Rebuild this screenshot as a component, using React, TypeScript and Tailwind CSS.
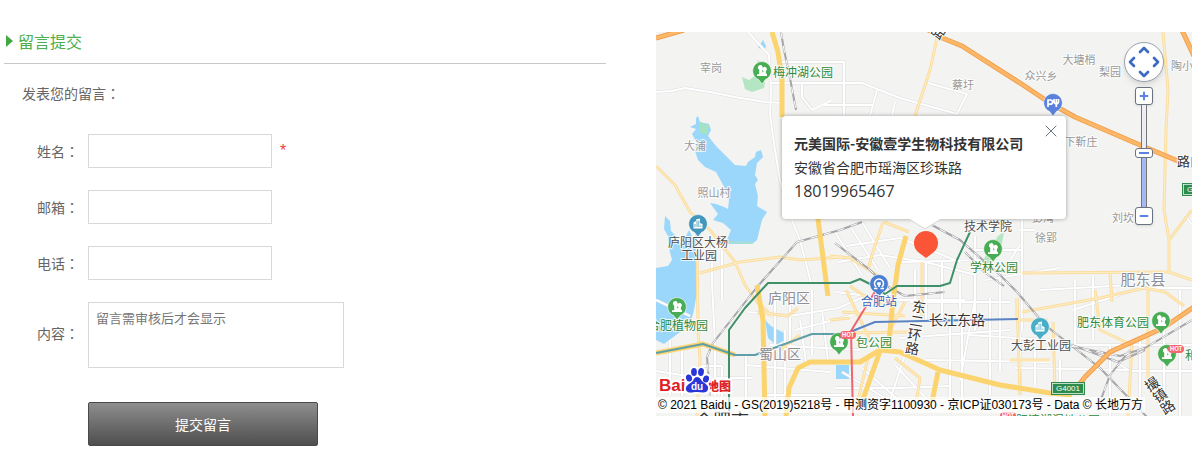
import { useState } from "react"
import { ChevronDown, ChevronLeft, ChevronRight, ChevronUp, Minus, Plus, X } from "lucide-react"

const whiteRoads = [
  "M656 92L671 91L685 88L710 92L735 97L765 102L784 103",
  "M748 32L757 42L769 55L771 90L770 115L775 150L780 180L788 210L800 240L811 283",
  "M778 62H844V116", "M770 83H862L900 98L957 114L967 94L928 83", "M877 90L870 116M824 105H872M895 102L892 116",
  "M802 82V97L812 110L832 100", "M656 300L690 316M712 245V283L715 345V396M722 250V300", "M746 355V410M715 378H752M700 366H722V396",
  "M745 365L830 372M775 300V400M785 330V395M765 395H850M795 330L850 316L880 300",
  "M748 312L790 316L838 308L866 296M790 300V360M800 320L806 362M812 290V355M822 310L828 362M770 345L860 350",
  "M835 232L862 275M850 226L878 270M862 222L890 268M838 262L880 255L925 262L976 275M846 246L900 238L960 262M836 292L900 300L965 300",
  "M842 372L885 398M862 368L910 410M895 365L935 408M835 388H900L950 386M905 355L890 400",
  "M902 262L980 260M915 270V315M926 262V320M942 262V320M910 302H1010M975 236V330M960 276V310M1000 262V370M1022 210V330",
  "M950 320V405M962 325V405M990 298V395M968 335L1050 340M900 338L1010 330M925 360L1050 362M1015 368L1130 370M975 300L960 380",
  "M1020 335V395M1035 345V385M1075 280V345M1093 276V340M1065 345H1192M1073 310L1140 288H1192M1040 290L1130 285",
  "M1020 230H1034M1020 245L1010 260M1185 215L1192 225M1098 350L1130 371H1192M1180 290V416M1164 330V410M1110 345V416",
  "M970 250H1022M985 280L1060 268M656 371L700 378M670 340V395M682 345V396M1140 335V400M900 400H1050M1060 360V416",
]

const paleRoads = [
  "M656 166L675 185L690 212L710 230L735 262L745 285L757 302L772 316",
  "M697 240L698 330L700 360L697 416", "M700 273L740 262L780 257L800 260L842 257",
  "M937 38L930 70L915 116", "M1163 32L1168 90L1166 130L1164 210L1169 240V272L1192 280M1169 240L1192 210",
  "M1022 273L1170 272M1110 272L1112 302M1017 298V320H1048M1022 312L1100 298L1145 288L1165 292L1184 306",
  "M1053 322L1055 390M1095 290L1100 330L1132 345L1128 416M1148 290V380M1010 360H1050",
  "M883 222L872 255L868 270M884 222L909 232M830 256L850 258L877 275M850 286L870 300L893 306M842 312L905 316M848 333L910 332",
  "M846 290L870 340M905 302L890 330M922 316V262M1017 298L1020 395M780 350L800 335M757 312L788 316L798 308",
  "M895 358L920 378L915 410M868 358L858 400M830 320L850 318",
]

const yellowRoads = [
  "M772 32L778 52L782 80V117", "M818 219L828 296", "M757 285L763 320L765 416",
  "M786 416L789 388L798 368L810 362H860L880 350L900 352L940 370L1000 385L1050 393L1072 395",
  "M862 402L880 351M932 402L938 372", "M906 236L898 265L893 300L888 352",
]

const orangeRoads = [
  "M656 38L684 30", "M925 28L940 37L962 46L1020 83L1050 103L1075 117L1140 145L1178 161",
  "M1180 26L1194 56", "M1194 307L1163 328L1110 352L1085 377L1075 390",
]

const railways = [
  "M781 32L784 50L790 78L796 110", "M797 242L757 287L713 343L707 357L710 396",
  "M797 242L840 230L862 222", "M915 216L960 240L1000 275L1017 292L1045 325L1100 368L1148 418",
  "M1192 320L1145 348L1120 356L1070 346", "M1130 350L1110 375L1100 402", "M835 243L870 270L885 285L905 296L945 292",
  "M965 252L984 272L1004 286", "M1072 345L1118 362L1145 350",
]

const labels = [
  { text: "宰岗", x: 711, y: 72, size: 11, fill: "#999999" },
  { text: "蔡圩", x: 963, y: 89, size: 11, fill: "#999999" },
  { text: "众兴乡", x: 1041, y: 80, size: 11, fill: "#999999" },
  { text: "大塘梢", x: 1079, y: 64, size: 11, fill: "#999999" },
  { text: "梨园", x: 1110, y: 76, size: 11, fill: "#999999" },
  { text: "陶小", x: 1182, y: 70, size: 11, fill: "#999999" },
  { text: "下靳庄", x: 1081, y: 146, size: 11, fill: "#999999" },
  { text: "大浦", x: 695, y: 150, size: 11, fill: "#999999" },
  { text: "照山村", x: 714, y: 197, size: 11, fill: "#999999" },
  { text: "彭湾", x: 1043, y: 222, size: 11, fill: "#999999" },
  { text: "徐郢", x: 1046, y: 242, size: 11, fill: "#999999" },
  { text: "刘坎", x: 1123, y: 222, size: 11, fill: "#999999" },
  { text: "庐阳区", x: 789, y: 303, size: 14, fill: "#8f8f98" },
  { text: "蜀山区", x: 780, y: 359, size: 14, fill: "#8f8f98" },
  { text: "肥东县", x: 1143, y: 285, size: 15, fill: "#8f8f98" },
  { text: "梅冲湖公园", x: 803, y: 77, size: 12, fill: "#2f8a3c" },
  { text: "学林公园", x: 994, y: 272, size: 12, fill: "#2f8a3c" },
  { text: "合肥植物园", x: 678, y: 330, size: 12, fill: "#2f8a3c" },
  { text: "包公园", x: 874, y: 347, size: 12, fill: "#2f8a3c" },
  { text: "肥东体育公园", x: 1113, y: 327, size: 12, fill: "#2f8a3c" },
  { text: "和", x: 1191, y: 360, size: 12, fill: "#2f8a3c" },
  { text: "合肥滨湖湿地公园", x: 1052, y: 425, size: 12, fill: "#2f8a3c" },
  { text: "庐阳区大杨", x: 698, y: 247, size: 12, fill: "#505050" },
  { text: "工业园", x: 699, y: 260, size: 12, fill: "#505050" },
  { text: "技术学院", x: 988, y: 231, size: 12, fill: "#505050" },
  { text: "大彭工业园", x: 1041, y: 350, size: 12, fill: "#505050" },
  { text: "合肥站", x: 879, y: 306, size: 12, fill: "#3567b8" },
  { text: "长江东路", x: 957, y: 325, size: 14, fill: "#333333" },
  { text: "路口", x: 1190, y: 166, size: 13, fill: "#333333" },
  { text: "合肥市", x: 722, y: 427, size: 18, fill: "#333333" },
]

// road names that run down along their road
const roadNames = [
  { text: "东二环路", x: 920, y: 300, angle: 9 },
  { text: "撮镇路", x: 1148, y: 378, angle: -34 },
  { text: "路", x: 933, y: 28, angle: -55 },
]

const pins = [
  { kind: "park", x: 762, y: 71, fill: "#49ad55" },
  { kind: "park", x: 993, y: 249, fill: "#49ad55" },
  { kind: "park", x: 677, y: 307, fill: "#49ad55" },
  { kind: "park", x: 1161, y: 321, fill: "#49ad55" },
  { kind: "park", x: 839, y: 342, fill: "#49ad55" },
  { kind: "park", x: 1167, y: 354, fill: "#49ad55" },
  { kind: "building", x: 698, y: 224, fill: "#4397bd" },
  { kind: "building", x: 1040, y: 327, fill: "#48adc6" },
  { kind: "station", x: 879, y: 284, fill: "#4a7fd0" },
  { kind: "parking", x: 1053, y: 103, fill: "#5a82dc" },
]

const fields = [
  { id: "name", label: "姓名", type: "text", required: true },
  { id: "email", label: "邮箱", type: "text", required: false },
  { id: "phone", label: "电话", type: "text", required: false },
]

function Colon() {
  return <span className="font-['Noto_Sans_CJK_TC',sans-serif]">：</span>
}

function Pin({ kind, x, y, fill }: { kind: string; x: number; y: number; fill: string }) {
  return (
    <g transform={`translate(${x} ${y})`}>
      <path d="M-3.5 8.5L0 13L3.5 8.5A9.3 9.3 0 1 0 -3.5 8.5Z" fill={fill} stroke="#fff" strokeWidth="0.6" />
      {kind === "park" && (
        <path d="M-2 -6a2.6 2.6 0 0 1 2.3 4v3.2h1V0a2.2 2.2 0 1 1 2.6 0v2.8H5V5H-5V3.2h2.2V-1.2A2.6 2.6 0 0 1 -2 -6Z" fill="#fff" />
      )}
      {kind === "building" && (
        <>
          <path d="M-4.500 4.500V-1.500L-2 -3V-4.500L2 -5.500V-1L4.500 0V4.500Z" fill="#fff" />
          <path d="M-1 -3.500V3M0.800 -3.500V3M-3 0V3M2.800 1.500V3" stroke={fill} strokeWidth="0.8" />
        </>
      )}
      {kind === "station" && (
        <>
          <path d="M-2.800 3A4.500 4.500 0 1 1 2.800 3M-5 4.500H-1.500M1.500 4.500H5" fill="none" stroke="#fff" strokeWidth="1.5" />
          <path d="M-1.800 -1.800H1.800V1H0.800V3H-0.800V1H-1.800Z" fill="#fff" />
        </>
      )}
      {kind === "parking" && (
        <path d="M-5 4V-3H-2.500A2 2 0 0 1 -2.500 1.200H-5M1 -4V-1.500A2 2 0 0 0 5.500 -1.500V-4M3.300 -4V4" fill="none" stroke="#fff" strokeWidth="1.7" />
      )}
    </g>
  )
}

function HotBadge({ x, y }: { x: number; y: number }) {
  return (
    <g transform={`translate(${x} ${y})`}>
      <rect x="-8" y="-4" width="16" height="8" rx="4" fill="#f5676d" />
      <text y="2" textAnchor="middle" fontSize="6" fontWeight="700" fill="#fff">HOT</text>
    </g>
  )
}

function MapCanvas() {
  return (
    <svg
      viewBox="656 32 536 384"
      preserveAspectRatio="xMidYMid slice"
      className="block size-full font-['Noto_Sans_CJK_SC',sans-serif]"
      aria-label="地图"
    >
      <rect x="656" y="32" width="536" height="384" fill="#f3f3f1" />

      {/* parks and water */}
      <g fill="#b5e6c3">
        <path d="M742 77L749 80L755 76L765 82L764 88L752 92L745 89Z" />
        <path d="M757 60L764 64L760 70Z" />
        <path d="M998 236L1004 232L1000 255L984 266L982 262Z" />
      </g>
      <g fill="#9bd7fb">
        <path d="M763 40L766 46L765 49L758 48Z" />
        <path d="M698 116L700 122L709 124L711 130L708 136L716 146L727 157L735 165L746 166L748 162L755 157L756 152L761 150L763 157L757 163L755 175L758 180L755 184L758 196L757 206L767 212L762 220L757 240L752 244H729L727 240L731 230L723 223L713 220L718 214L710 203L716 204L724 207L728 209L729 200L728 194L722 183L716 172L705 167L698 160L695 151L697 143L692 134L696 129L690 127L696 124L696 118Z" />
        <path d="M665 216L670 221L671 231L676 236L680 243L685 238L689 230L694 240L697 232V292L694 310L690 325L676 335L664 344L656 340V268L668 266L672 260L669 248L668 236L664 229Z" />
        <path d="M765 320L771 326L784 333L785 340L776 345L768 338Z" />
        <path d="M836 365H849V379H836Z" />
      </g>
      <path d="M699 122L709 125L707 135L699 132Z" fill="#a4e2c4" />
      <path d="M727 242L753 243" stroke="#a9dfd0" strokeWidth="2" />

      <g fill="none" strokeLinejoin="round">
        {whiteRoads.map((d) => <path key={d} d={d} stroke="#dedee2" strokeWidth="3" />)}
        {whiteRoads.map((d) => <path key={d} d={d} stroke="#ffffff" strokeWidth="2" />)}
        {paleRoads.map((d) => <path key={d} d={d} stroke="#fbdda0" strokeWidth="3" />)}
        {paleRoads.map((d) => <path key={d} d={d} stroke="#ffefc6" strokeWidth="1" />)}
        {railways.map((d) => <path key={d} d={d} stroke="#a5a5aa" strokeWidth="2" />)}
        {railways.map((d) => <path key={d} d={d} stroke="#ffffff" strokeWidth="1" strokeDasharray="7 7" />)}
        {yellowRoads.map((d) => <path key={d} d={d} stroke="#fbd46f" strokeWidth="5" />)}
        {orangeRoads.map((d) => <path key={d} d={d} stroke="#f0a04c" strokeWidth="5" />)}
        {orangeRoads.map((d) => <path key={d} d={d} stroke="#fdb768" strokeWidth="3" />)}

        {/* metro lines */}
        <path d="M656 353L703 344L735 355" stroke="#fbd46f" strokeWidth="5" />
        <path d="M656 353L703 344L735 355H755L812 334H850" stroke="#5f9fa8" strokeWidth="2" />
        <path d="M850 332L875 322L1018 319" stroke="#5b84c4" strokeWidth="2" />
        <path d="M729 416V330L745 308L768 283H850L860 279L872 285L885 294L897 286H940L950 283L957 260L970 232" stroke="#3f9068" strokeWidth="2" />
        <path d="M876 290L851 331L853 416" stroke="#ee6470" strokeWidth="2" />
      </g>

      {pins.map((pin) => <Pin key={`${pin.x}-${pin.y}`} {...pin} />)}

      {labels.map(({ text, x, y, size, fill }) => (
        <text
          key={`${text}-${x}`}
          x={x}
          y={y}
          fontSize={size}
          fill={fill}
          textAnchor="middle"
          stroke="#fff"
          strokeWidth="2"
          strokeOpacity="0.8"
          paintOrder="stroke"
        >
          {text}
        </text>
      ))}
      {roadNames.map(({ text, x, y, angle }) => (
        <text
          key={text}
          transform={`rotate(${angle} ${x} ${y})`}
          x={x}
          y={y}
          fontSize="14"
          fill="#333"
          stroke="#fff"
          strokeWidth="2"
          paintOrder="stroke"
          className="[writing-mode:vertical-rl]"
        >
          {text}
        </text>
      ))}

      <HotBadge x={848} y={335} />
      <HotBadge x={1176} y={349} />
      <HotBadge x={1008} y={416} />

      {/* expressway shields */}
      <rect x="1051" y="382" width="34" height="13" fill="#2d8c4c" />
      <rect x="1052.500" y="383.500" width="31" height="10" fill="none" stroke="#fff" strokeWidth="0.7" />
      <text x="1068" y="391" fontSize="8" fill="#fff" textAnchor="middle" className="font-['Liberation_Sans',sans-serif]">G4001</text>
      <rect x="1182" y="183" width="34" height="13" fill="#2d8c4c" />
      <rect x="1183.500" y="184.500" width="31" height="10" fill="none" stroke="#fff" strokeWidth="0.7" />
      <text x="1199" y="192" fontSize="8" fill="#fff" textAnchor="middle" className="font-['Liberation_Sans',sans-serif]">G4001</text>

      {/* selected place */}
      <path d="M926 258L918 252A12 12 0 1 1 934 252Z" fill="#fb5538" />
    </svg>
  )
}

function Paw() {
  return (
    <>
      <ellipse cx="31" cy="12" rx="3" ry="3.600" transform="rotate(-15 31 12)" />
      <ellipse cx="36" cy="6" rx="2.900" ry="4" />
      <ellipse cx="43" cy="6" rx="2.900" ry="4" transform="rotate(8 43 6)" />
      <ellipse cx="48" cy="13" rx="3" ry="3.600" transform="rotate(15 48 13)" />
      <path d="M39 11C42 11 43 14 45 16C48 18 51 20 50 23C49 28 44 26 39 26C34 26 30 28 28 24C27 20 31 18 34 16C36 14 36 11 39 11Z" />
    </>
  )
}

function BaiduLogo() {
  return (
    <svg viewBox="0 0 76 30" className="h-[30px] w-[76px]" aria-label="百度地图">
      <g stroke="#fff" strokeWidth="4" strokeLinejoin="round" paintOrder="stroke" className="font-['Liberation_Sans','Noto_Sans_CJK_SC',sans-serif]">
        <text x="1" y="25" fontSize="17" fontWeight="700" fill="#dd2125">Bai</text>
        <text x="49" y="25" fontSize="12" fontWeight="900" fill="#dd2125">地图</text>
        <g fill="#fff"><Paw /></g>
      </g>
      <g fill="#2a36d8"><Paw /></g>
      <text x="39" y="24" textAnchor="middle" fontSize="10" fontWeight="700" fill="#fff" className="font-['Liberation_Sans',sans-serif]">du</text>
    </svg>
  )
}

function MapControls() {
  const [zoom, setZoom] = useState(12)

  return (
    <div className="absolute top-[10px] right-7 flex flex-col items-center">
      <div className="mb-[5px] grid size-10 grid-cols-3 grid-rows-3 place-items-center rounded-full border border-gray-400 bg-white p-px text-[#3d6bc4] shadow-md">
        <button type="button" aria-label="向上平移" className="col-start-2"><ChevronUp size={16} strokeWidth={4} /></button>
        <button type="button" aria-label="向左平移" className="col-start-1 row-start-2"><ChevronLeft size={16} strokeWidth={4} /></button>
        <button type="button" aria-label="向右平移" className="col-start-3 row-start-2"><ChevronRight size={16} strokeWidth={4} /></button>
        <button type="button" aria-label="向下平移" className="col-start-2 row-start-3"><ChevronDown size={16} strokeWidth={4} /></button>
      </div>
      <button
        type="button"
        aria-label="放大一级"
        onClick={() => setZoom(Math.min(19, zoom + 1))}
        className="flex size-[18px] items-center justify-center rounded-[3px] border border-gray-500 bg-white text-[#5b82e0] shadow"
      >
        <Plus size={12} strokeWidth={4} />
      </button>
      <input
        type="range"
        min={4}
        max={19}
        value={zoom}
        onChange={(e) => setZoom(Number(e.target.value))}
        aria-label="缩放级别"
        className="h-[102px] w-[18px] appearance-none bg-[linear-gradient(to_right,#777_1px,transparent_1px,transparent_5px,#777_5px),linear-gradient(to_bottom,#ececf4_45%,#a5b9f3_45%)] bg-[length:6px_100%] bg-center bg-no-repeat [direction:rtl] [writing-mode:vertical-lr] [&::-webkit-slider-thumb]:h-[10px] [&::-webkit-slider-thumb]:w-[18px] [&::-webkit-slider-thumb]:appearance-none [&::-webkit-slider-thumb]:rounded-[3px] [&::-webkit-slider-thumb]:border [&::-webkit-slider-thumb]:border-gray-500 [&::-webkit-slider-thumb]:bg-[linear-gradient(#5b82e0,#5b82e0)] [&::-webkit-slider-thumb]:bg-[length:10px_2px] [&::-webkit-slider-thumb]:bg-center [&::-webkit-slider-thumb]:bg-no-repeat [&::-webkit-slider-thumb]:bg-white"
      />
      <button
        type="button"
        aria-label="缩小一级"
        onClick={() => setZoom(Math.max(4, zoom - 1))}
        className="flex size-[18px] items-center justify-center rounded-[3px] border border-gray-500 bg-white text-[#5b82e0] shadow"
      >
        <Minus size={12} strokeWidth={4} />
      </button>
    </div>
  )
}

function InfoWindow({ onClose }: { onClose: () => void }) {
  return (
    <div className="absolute top-[84px] left-1/2 w-[284px] -translate-x-1/2 rounded bg-white px-3 pt-[15px] pb-4 text-[#333] shadow-[0_0_4px_rgba(0,0,0,0.35)]">
      <button type="button" aria-label="关闭" onClick={onClose} className="absolute top-[5px] right-[5px] text-gray-600">
        <X size={20} strokeWidth={1} />
      </button>
      <h3 className="text-sm leading-6 font-bold whitespace-nowrap">元美国际-安徽壹学生物科技有限公司</h3>
      <p className="text-sm leading-6">安徽省合肥市瑶海区珍珠路</p>
      <p className="font-['Open_Sans',sans-serif] text-base leading-6">18019965467</p>
      <svg viewBox="0 0 32 11" className="absolute top-full left-[127px] h-[11px] w-8" aria-hidden="true">
        <path d="M0 0L16 10L32 0Z" fill="#fff" />
        <path d="M0 0L16 10L32 0" fill="none" stroke="#d5d5d5" />
      </svg>
    </div>
  )
}

export default function App() {
  const [infoOpen, setInfoOpen] = useState(true)

  return (
    <main className="grid grid-cols-[602fr_536fr] gap-[50px] bg-white pr-1.5 pb-3 pl-1 font-['Noto_Sans_CJK_SC',sans-serif] text-sm text-[#666]">
      <section className="pt-5">
        <h2 className="flex h-11 items-center gap-[5px] border-b border-[#c8c8c8] pb-0.5 pl-0.5 text-base text-[#4caf50]">
          <svg viewBox="0 0 7 12" className="h-3 w-[7px]" aria-hidden="true">
            <path d="M0 0L7 6L0 12Z" fill="#43a843" />
          </svg>
          留言提交
        </h2>
        <p className="mt-[19px] pl-[18px] leading-5">发表您的留言<Colon /></p>

        <form className="mt-[31px] flex flex-col gap-[22px]" onSubmit={(e) => e.preventDefault()}>
          {fields.map((field) => (
            <div key={field.id} className="flex items-center">
              <label htmlFor={field.id} className="mr-[9px] w-[75px] text-right">{field.label}<Colon /></label>
              <input
                id={field.id}
                name={field.id}
                type={field.type}
                required={field.required}
                className="h-[34px] w-[184px] border border-[#d8d8d8] px-2 outline-none focus:border-gray-400"
              />
              {field.required && <span className="ml-2 font-['Liberation_Sans',sans-serif] text-base text-[#f04040]">*</span>}
            </div>
          ))}
          <div className="flex items-center">
            <label htmlFor="content" className="mr-[9px] w-[75px] pb-1 text-right">内容<Colon /></label>
            <textarea
              id="content"
              name="content"
              placeholder="留言需审核后才会显示"
              className="h-[66px] w-64 resize-none border border-[#d8d8d8] px-[7px] py-1 text-[13px] leading-[22px] outline-none placeholder:text-[#777] focus:border-gray-400"
            />
          </div>
          <button
            type="submit"
            className="mt-3 ml-[84px] h-11 w-[230px] rounded-xs border border-[#4a4a4a] bg-linear-to-b from-[#8e8e8e] to-[#4f4f4f] text-sm text-white"
          >
            提交留言
          </button>
        </form>
      </section>

      <section className="pt-8">
        <div className="relative h-96 overflow-hidden">
          <MapCanvas />
          {infoOpen && <InfoWindow onClose={() => setInfoOpen(false)} />}
          <MapControls />
          <a href="#baidu" className="absolute bottom-5 left-0.5">
            <BaiduLogo />
          </a>
          <p className="absolute bottom-[3px] left-0 bg-white/70 px-0.5 font-['Liberation_Sans','Noto_Sans_CJK_SC',sans-serif] text-xs leading-4 whitespace-nowrap text-black">
            © 2021 Baidu - GS(2019)5218号 - 甲测资字1100930 - 京ICP证030173号 - Data © 长地万方
          </p>
        </div>
      </section>
    </main>
  )
}
